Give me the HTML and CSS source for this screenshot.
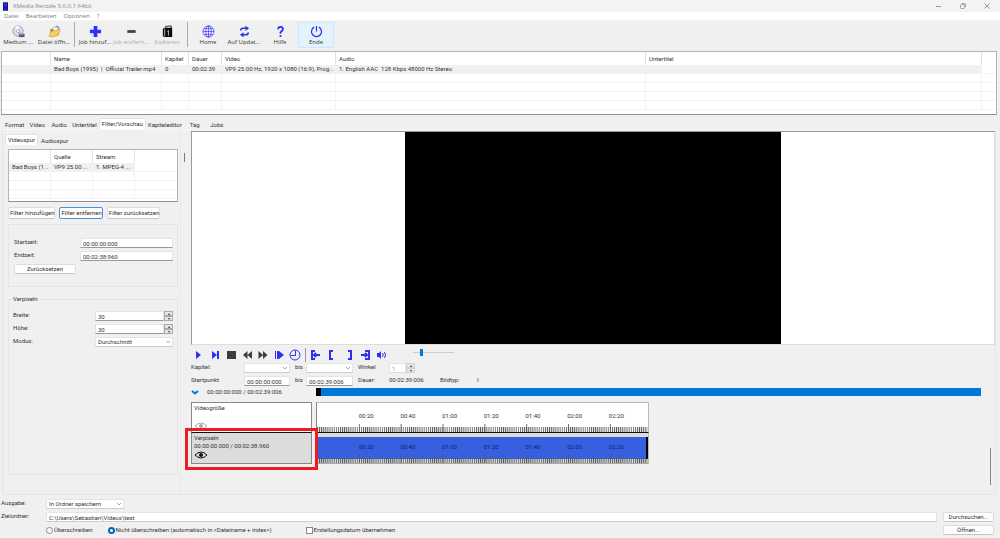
FILE: index.html
```
<!DOCTYPE html>
<html lang="de">
<head>
<meta charset="UTF-8" />
<meta name="viewport" content="width=device-width, initial-scale=1" />
<title>XMedia Recode 3.6.0.1 64bit</title>
<link rel="stylesheet" href="styles.css">
</head>
<body>

  <header class="titlebar">
    <svg class="app-icon" viewBox="0 0 6 10"><rect width="6" height="10" fill="#111144"/><rect x="1" y="1" width="4" height="4" fill="#2b2bff"/><rect x="1" y="6" width="4" height="3" fill="#2020f0"/></svg>
    <span class="app-title">XMedia Recode 3.6.0.1 64bit</span>
    <button class="win-btn" aria-label="Minimieren"><svg viewBox="0 0 8 8"><path d="M1 4.500h5"/></svg></button>
    <button class="win-btn" aria-label="Wiederherstellen"><svg viewBox="0 0 8 8"><rect x="1.500" y="2.500" width="4" height="4" rx="1"/><path d="M3 1.500h2.500q1 0 1 1V5"/></svg></button>
    <button class="win-btn" aria-label="Schließen"><svg viewBox="0 0 8 8"><path d="M1.500 1.500l5 5M6.500 1.500l-5 5"/></svg></button>
  </header>

  <nav class="menubar">
    <a href="#">Datei</a>
    <a href="#">Bearbeiten</a>
    <a href="#">Optionen</a>
    <a href="#">?</a>
  </nav>

  <div class="toolbar">
    <button class="tool">
      <svg viewBox="0 0 14 14"><circle cx="6.500" cy="6.500" r="5.500" fill="#dcdcee" stroke="#9a9ab8"/><path d="M6.500 6.500L3 2.500A5 5 0 0 1 8 1.500z" fill="#fff"/><path d="M6.500 6.500L11 9a5 5 0 0 1-4 2.500z" fill="#b9b9dd"/><circle cx="6.500" cy="6.500" r="1.600" fill="#fff" stroke="#8888aa" stroke-width=".6"/><rect x="7.500" y="9.500" width="6" height="3.500" fill="#555"/><rect x="8" y="10" width="4" height="1" fill="#aaa"/></svg>
      <span>Medium ...</span>
    </button>
    <button class="tool">
      <svg viewBox="0 0 14 14"><path d="M2 5l3-1.500 1.500 1L11 2l1 8-8 3z" fill="#c98a1b"/><path d="M5 3l5-2 1.500 5-5 2.500z" fill="#f4f8ff" stroke="#7b94b4" stroke-width=".5"/><path d="M1 12l2.500-5 4-1 5.500-2-2 7-7 2z" fill="#f7d064" stroke="#c98a1b" stroke-width=".6"/><path d="M8 2.500q3-2.500 4 1" fill="none" stroke="#3d78c8"/></svg>
      <span>Datei öffn...</span>
    </button>
    <span class="tool-sep"></span>
    <button class="tool">
      <svg viewBox="0 0 14 14"><path d="M5 1h4v4h4v4H9v4H5V9H1V5h4z" fill="#2f2ff5"/></svg>
      <span>Job hinzuf...</span>
    </button>
    <button class="tool" disabled>
      <svg viewBox="0 0 14 14"><rect x="2.500" y="5.500" width="9" height="3" fill="#444"/></svg>
      <span>Job entfern...</span>
    </button>
    <button class="tool" disabled>
      <svg viewBox="0 0 14 14"><path d="M2 4l2-1h8v10H4l-2-1z" fill="#0a0a0a"/><path d="M5 3V1.500l6-.5v2" fill="none" stroke="#222"/><path d="M4 4v8M8 6.500v5" stroke="#eee" stroke-width=".8"/><path d="M7 7l1.500-1" stroke="#eee"/></svg>
      <span>Kodieren</span>
    </button>
    <span class="tool-sep"></span>
    <button class="tool">
      <svg class="line thin" viewBox="0 0 14 14"><circle cx="7" cy="7" r="6"/><ellipse cx="7" cy="7" rx="3" ry="6"/><path d="M7 1v12M1 7h12M2 4h10M2 10h10"/></svg>
      <span>Home</span>
    </button>
    <button class="tool">
      <svg viewBox="0 0 14 14"><path d="M3 6q0-2.500 2.500-2.500H9M11 8q0 2.500-2.500 2.500H5" fill="none" stroke="#2f2ff5" stroke-width="1.800"/><path d="M8 .8l4 2.700-4 2.700zM6 7.800l-4 2.700 4 2.700z" fill="#2f2ff5"/></svg>
      <span>Auf Updat...</span>
    </button>
    <button class="tool">
      <svg viewBox="0 0 14 14"><path d="M4.500 4.500Q4.500 2 7 2t2.500 2.300Q9.500 6 8 6.800T7 9.500" fill="none" stroke="#2f2ff5" stroke-width="2"/><rect x="6" y="11" width="2" height="2" fill="#2f2ff5"/></svg>
      <span>Hilfe</span>
    </button>
    <button class="tool active">
      <svg viewBox="0 0 14 14"><path d="M4.500 2.300a5.400 5.400 0 1 0 5 0M7 1v6" fill="none" stroke="#2f2ff5" stroke-width="1.300"/></svg>
      <span>Ende</span>
    </button>
  </div>

  <div class="list jobs">
    <table>
      <colgroup><col class="c-icon"><col class="c-name"><col class="c-chap"><col class="c-dur"><col class="c-video"><col class="c-audio"><col><col class="c-end"></colgroup>
      <thead>
        <tr><th></th><th>Name</th><th>Kapitel</th><th>Dauer</th><th>Video</th><th>Audio</th><th>Untertitel</th><th></th></tr>
      </thead>
      <tbody>
        <tr class="selected"><td></td><td>Bad Boys (1995) &nbsp;| &nbsp;Official Trailer.mp4</td><td>0</td><td>00:02:39</td><td>VP9 25.00 Hz, 1920 x 1080 (16:9), Prog...</td><td>1. English AAC &nbsp;128 Kbps 48000 Hz Stereo</td><td></td><td></td></tr>
        <tr><td></td><td></td><td></td><td></td><td></td><td></td><td></td><td></td></tr>
        <tr><td></td><td></td><td></td><td></td><td></td><td></td><td></td><td></td></tr>
        <tr><td></td><td></td><td></td><td></td><td></td><td></td><td></td><td></td></tr>
        <tr><td></td><td></td><td></td><td></td><td></td><td></td><td></td><td></td></tr>
      </tbody>
    </table>
  </div>

  <div class="tabs main-tabs">
    <button class="tab">Format</button>
    <button class="tab">Video</button>
    <button class="tab">Audio</button>
    <button class="tab">Untertitel</button>
    <button class="tab current">Filter/Vorschau</button>
    <button class="tab">Kapiteleditor</button>
    <button class="tab">Tag</button>
    <button class="tab">Jobs</button>
  </div>

  <main class="page">
    <section class="side">
      <div class="tabs">
        <button class="tab current">Videospur</button>
        <button class="tab">Audiospur</button>
      </div>
      <div class="side-body">
        <div class="list streams">
          <table>
            <colgroup><col class="c-stream"><col class="c-stream"><col class="c-stream"><col></colgroup>
            <thead>
              <tr><th></th><th>Quelle</th><th>Stream</th><th></th></tr>
            </thead>
            <tbody>
              <tr class="selected"><td>Bad Boys (1...</td><td>VP9 25.00 ...</td><td>1. MPEG-4 ...</td><td></td></tr>
              <tr><td></td><td></td><td></td><td></td></tr>
              <tr><td></td><td></td><td></td><td></td></tr>
              <tr><td></td><td></td><td></td><td></td></tr>
            </tbody>
          </table>
        </div>
        <div class="filter-btns">
          <button class="btn">Filter hinzufügen</button>
          <button class="btn focus">Filter entfernen</button>
          <button class="btn">Filter zurücksetzen</button>
        </div>
        <div class="group times">
          <label for="start">Startzeit:</label>
          <input type="text" id="start" value="00:00:00:000">
          <label for="end">Endzeit:</label>
          <input type="text" id="end" value="00:02:38:960">
          <button class="btn reset">Zurücksetzen</button>
        </div>
        <fieldset class="group pixelate">
          <legend>Verpixeln</legend>
          <div class="fields">
            <label for="width">Breite:</label>
            <span class="spin"><input type="text" id="width" value="30"><span class="steps"><button aria-label="Breite erhöhen">▴</button><button aria-label="Breite verringern">▾</button></span></span>
            <label for="height">Höhe:</label>
            <span class="spin"><input type="text" id="height" value="30"><span class="steps"><button aria-label="Höhe erhöhen">▴</button><button aria-label="Höhe verringern">▾</button></span></span>
            <label for="mode">Modus:</label>
            <select id="mode"><option>Durchschnitt</option></select>
          </div>
        </fieldset>
      </div>
    </section>

    <div class="splitter"></div>

    <section class="preview">
      <div class="screen"><div class="video"></div></div>

      <div class="player">
        <button aria-label="Wiedergabe"><svg viewBox="0 0 12 12"><path d="M3 2l5 4-5 4z"/></svg></button>
        <button aria-label="Nächstes Bild"><svg viewBox="0 0 12 12"><path d="M3 2l5 4-5 4zM8 2h2v8H8z"/></svg></button>
        <button class="dark" aria-label="Stopp"><svg viewBox="0 0 12 12"><path d="M2 2h9v8H2z"/></svg></button>
        <button class="dark" aria-label="Zurückspulen"><svg viewBox="0 0 12 12"><path d="M6.500 2v8L2 6zM11 2v8L6.500 6z"/></svg></button>
        <button class="dark" aria-label="Vorspulen"><svg viewBox="0 0 12 12"><path d="M1.500 2v8L6 6zM6 2v8l4.500-4z"/></svg></button>
        <button aria-label="Zeitlupe"><svg viewBox="0 0 12 12"><path d="M2 2h1v8H2zM4 2h2v8H4zM6 2l5 4-5 4z"/></svg></button>
        <button aria-label="Position"><svg class="line" viewBox="0 0 12 12"><circle cx="6" cy="6" r="5"/><path d="M6.500 1.500v5H2"/></svg></button>
        <span class="player-sep"></span>
        <button aria-label="Zum Startpunkt"><svg class="line thick" viewBox="0 0 12 12"><path d="M5 2H2v8h3M10 6H4M6 4L4 6l2 2"/></svg></button>
        <button aria-label="Startpunkt setzen"><svg class="line thick" viewBox="0 0 12 12"><path d="M7 2H4v8h3"/></svg></button>
        <button class="gap" aria-label="Endpunkt setzen"><svg class="line thick" viewBox="0 0 12 12"><path d="M3 2h3v8H3"/></svg></button>
        <button aria-label="Zum Endpunkt"><svg class="line thick" viewBox="0 0 12 12"><path d="M4 2h4v8H4M0 6h6M4 4l2 2-2 2"/></svg></button>
        <button aria-label="Ton"><svg viewBox="0 0 12 12"><path d="M0 4h2l2-2v8L2 8H0z"/><path class="wave" d="M5.500 4q1.500 2 0 4M7.500 3q2 3 0 6"/></svg></button>
        <input class="volume" type="range" aria-label="Lautstärke" min="0" max="100" value="18">
      </div>

      <div class="points">
        <label for="chapFrom">Kapitel:</label>
        <select id="chapFrom"><option></option></select>
        <label class="to" for="chapTo">bis</label>
        <select id="chapTo"><option></option></select>
        <label class="pad" for="angle">Winkel</label>
        <span class="spin small"><input type="text" id="angle" value="1"><span class="steps"><button aria-label="Winkel erhöhen">▴</button><button aria-label="Winkel verringern">▾</button></span></span>
        <span></span>
        <span></span>
        <label for="from">Startpunkt</label>
        <input type="text" id="from" value="00:00:00:000">
        <label class="to" for="to">bis</label>
        <input type="text" id="to" value="00:02:39:006">
        <span class="pad">Dauer:</span>
        <span>00:02:39:006</span>
        <span>Bildtyp:</span>
        <span>I</span>
      </div>

      <div class="timeline">
        <div class="clock">
          <button class="fold" aria-label="Zeitleiste einklappen"><svg viewBox="0 0 8 5"><path d="M1 1l3 2.500L7 1"/></svg></button>
          <span>00:00:00:000 / 00:02:39:006</span>
        </div>
        <input class="seek" type="range" aria-label="Position" min="0" max="159" value="0">

        <div class="track-head">
          <span>Videogröße</span>
          <svg class="eye faint" viewBox="0 0 14 8"><path d="M1 4q6-6 12 0-6 6-12 0z"/><circle cx="7" cy="4" r="2"/></svg>
        </div>
        <div class="ruler">
          <div class="labels"><span></span><span>00:20</span><span>00:40</span><span>01:00</span><span>01:20</span><span>01:40</span><span>02:00</span><span>02:20</span></div>
          <svg class="ticks" viewBox="0 0 158 8" preserveAspectRatio="none">
            <defs>
              <pattern id="sec" width="1" height="8" patternUnits="userSpaceOnUse"><rect y="3" width=".45" height="5"/></pattern>
              <pattern id="mark" width="20" height="8" patternUnits="userSpaceOnUse"><rect width=".4" height="8"/></pattern>
            </defs>
            <rect width="158" height="8" fill="url(#sec)"/>
            <rect x="20" width="138" height="8" fill="url(#mark)"/>
          </svg>
        </div>

        <div class="track-head selected">
          <span>Verpixeln</span>
          <span>00:00:00.000 / 00:02:38.960</span>
          <svg class="eye" viewBox="0 0 14 8"><path d="M1 4q6-6 12 0-6 6-12 0z"/><circle cx="7" cy="4" r="2"/></svg>
          <div class="highlight"></div>
        </div>
        <div class="ruler filled">
          <div class="labels"><span></span><span>00:20</span><span>00:40</span><span>01:00</span><span>01:20</span><span>01:40</span><span>02:00</span><span>02:20</span></div>
          <svg class="ticks" viewBox="0 0 158 8" preserveAspectRatio="none">
            <rect width="158" height="8" fill="url(#sec)"/>
            <rect x="20" width="138" height="8" fill="url(#mark)"/>
          </svg>
        </div>
      </div>
    </section>

    <div class="scroll"><div class="scroll-thumb"></div></div>
  </main>

  <footer class="output">
    <label for="target">Ausgabe:</label>
    <select id="target"><option>In Ordner speichern</option></select>
    <span></span>
    <label for="folder">Zielordner:</label>
    <input type="text" id="folder" value="C:\Users\Sebastian\Videos\test">
    <button class="btn">Durchsuchen...</button>
    <span></span>
    <div class="options">
      <label><input type="radio" name="overwrite">Überschreiben</label>
      <label><input type="radio" name="overwrite" checked>Nicht überschreiben (automatisch in &lt;Dateiname + index&gt;)</label>
      <label><input type="checkbox">Erstellungsdatum übernehmen</label>
    </div>
    <button class="btn">Öffnen...</button>
  </footer>

</body>
</html>
```
FILE: styles.css
```
* {
  box-sizing: border-box;
}
body {
  margin: 0;
  min-height: 100vh;
  display: flex;
  flex-direction: column;
  background: #f0f0f0;
  color: #333;
  font-family: Roboto, "Liberation Sans", sans-serif;
  font-size: 6px;
  line-height: 8px;
}
button,
input,
select {
  font: inherit;
  color: inherit;
  margin: 0;
  padding: 0;
  border: none;
  background: none;
  border-radius: 0;
  min-width: 0;
}
svg {
  display: block;
}

/* title and menu */
.titlebar,
.menubar,
.toolbar {
  font-family: "Open Sans", "Noto Sans", sans-serif;
}
.titlebar {
  display: flex;
  align-items: center;
  height: 12px;
  padding: 0 9px 0 3px;
  background: #f3f3f3;
  color: #888;
}
.app-icon {
  width: 5px;
  height: 9px;
  margin-right: 5px;
}
.app-title {
  flex: 1;
}
.win-btn {
  width: 8px;
  height: 8px;
  margin-left: 16px;
}
.win-btn svg {
  fill: none;
  stroke: #999;
}
.menubar {
  display: flex;
  gap: 7px;
  height: 9px;
  padding: 0 4px;
  line-height: 9px;
  background: #fff;
  border-bottom: 1px solid #f5f5f5;
}
.menubar a {
  color: #777;
  text-decoration: none;
}

/* toolbar */
.toolbar {
  display: flex;
  align-items: flex-start;
  height: 30px;
  padding-top: 1px;
}
.tool {
  display: flex;
  flex-direction: column;
  align-items: center;
  width: 36px;
  height: 26px;
  padding-top: 2px;
  border: 1px solid transparent;
  border-radius: 2px;
  white-space: nowrap;
}
.tool svg {
  width: 13px;
  height: 13px;
}
.tool:disabled {
  color: #aaa;
}
.tool.active {
  background: #e3f2fd;
  border-color: #cce8ff;
}
.tool-sep {
  width: 1px;
  height: 25px;
  margin: 0 2px;
  background: #aaa;
}
.line {
  fill: none;
  stroke: #2f2ff5;
}
.line.thin {
  stroke-width: .7;
}
.line.thick {
  stroke-width: 2;
}

/* lists */
.list {
  background: #fff;
  border: 1px solid #b4b4b4;
  border-bottom-color: #90909a;
  overflow: hidden;
}
.jobs {
  height: 64px;
  margin: 0 3px 0 1px;
}
.list table {
  width: 100%;
  table-layout: fixed;
  border-collapse: separate;
  border-spacing: 0;
}
.list th {
  height: 13px;
  padding: 0 3px;
  font-weight: normal;
  text-align: left;
  border-right: 1px solid #e2e2e2;
}
.list td {
  height: 9px;
  padding: 0 3px;
  white-space: nowrap;
  border-right: 1px solid #f3f3f3;
  border-bottom: 1px solid #f3f3f3;
}
.list th:last-child,
.list td:last-child {
  border-right: none;
}
.list .selected td:not(:last-child) {
  background: #f0f0f0;
}
.c-icon { width: 49px; }
.c-name { width: 111px; }
.c-chap { width: 27px; }
.c-dur { width: 33px; }
.c-video { width: 114px; }
.c-audio { width: 310px; }
.c-end { width: 14px; }
.c-stream { width: 42px; }

/* tabs */
.tabs {
  display: flex;
  align-items: flex-end;
}
.main-tabs {
  padding: 3px 3px 0;
}
.tab {
  height: 10px;
  min-width: 22px;
  padding: 0 1px;
  border: 1px solid transparent;
  border-bottom: none;
}
.tab.current {
  height: 11px;
  padding: 0 2px;
  background: #fff;
  border-color: #e2e2e2;
}

/* page */
.page {
  flex: 1;
  display: flex;
  margin: 0 4px 0 2px;
  border: 1px solid #e6e6e6;
  border-top-color: #f8f8f8;
}
.side {
  width: 178px;
  padding: 4px 2px 0;
  border-right: 1px solid #e9e9e9;
}
.side .tab {
  padding: 0 2px;
}
.side-body {
  padding: 4px 0 0 3px;
}
.streams {
  height: 53px;
}
.filter-btns {
  display: flex;
  gap: 4px;
  margin-right: 18px;
  padding: 5px 0;
}
.btn {
  height: 12px;
  line-height: 10px;
  padding: 0 1px;
  background: #fdfdfd;
  border: 1px solid #ddd;
  border-bottom-color: #c4c4c4;
  border-radius: 2px;
  white-space: nowrap;
}
.filter-btns .btn {
  flex: 1 1 auto;
}
.btn.focus {
  border: 1px solid #4a90d9;
}
.group {
  margin: 0;
  border: 1px solid #e5e5e5;
}
.times {
  display: grid;
  grid-template-columns: 66px 1fr;
  gap: 3px 0;
  align-content: start;
  height: 63px;
  padding: 13px 4px 0 5px;
}
.pixelate {
  height: 180px;
  margin-top: 8px;
  padding: 0 4px;
}
.pixelate legend {
  padding: 0;
}
.fields {
  display: grid;
  grid-template-columns: 82px 1fr;
  gap: 3px 0;
  padding-top: 8px;
}
input[type="text"],
select {
  height: 10px;
  width: 100%;
  padding: 0 2px;
  background-color: #fff;
  border: 1px solid #e4e4e4;
  border-bottom-color: #999;
}
select {
  appearance: none;
  line-height: 8px;
  background-image: url("data:image/svg+xml,%3Csvg xmlns='http://www.w3.org/2000/svg' viewBox='0 0 6 4'%3E%3Cpath d='M1 1l2 2 2-2' fill='none' stroke='%23888' stroke-width='.7'/%3E%3C/svg%3E");
  background-repeat: no-repeat;
  background-position: right 1px center;
  background-size: 6px 4px;
  border-bottom-color: #ccc;
}
.reset {
  width: 62px;
  height: 10px;
  line-height: 8px;
}
.spin {
  display: flex;
  height: 10px;
}
.steps {
  display: flex;
  flex-direction: column;
  flex: none;
  width: 9px;
}
.steps button {
  height: 5px;
  font-size: 4px;
  line-height: 3px;
  background: #e8e8e8;
  border: 1px solid #aaa;
  overflow: hidden;
}
.small input[type="text"] {
  color: #999;
  border-bottom-color: #ddd;
}
.small .steps button {
  border-color: #d0d0d0;
}

.splitter {
  width: 10px;
  padding: 23px 0 0 3px;
}
.splitter::before {
  content: "";
  display: block;
  width: 1px;
  height: 9px;
  background: #777;
}

/* preview */
.preview {
  flex: 1;
  padding-top: 1px;
}
.screen {
  height: 214px;
  margin-right: -10px;
  background: #fff;
  border: 1px solid #999;
  border-right-color: #ddd;
  border-bottom-color: #ddd;
}
.video {
  height: 212px;
  aspect-ratio: 376 / 212;
  margin: 0 auto;
  background: #000;
}
.player {
  display: flex;
  align-items: center;
  gap: 4px;
  height: 16px;
  margin-top: 2px;
  padding-left: 2px;
}
.player button {
  width: 12px;
  height: 12px;
}
.player svg {
  fill: #3030f0;
}
.player .line {
  fill: none;
}
.player .dark svg {
  fill: #3c3c3c;
}
.player .gap {
  margin-left: 3px;
}
.player .wave {
  fill: none;
  stroke: #3030f0;
}
.player-sep {
  width: 1px;
  height: 14px;
  background: #999;
}
input[type="range"] {
  appearance: none;
}
.volume {
  width: 41px;
  height: 8px;
  margin: 0 0 6px 20px;
}
.volume::-webkit-slider-runnable-track {
  height: 1px;
  background: #ccc;
}
.volume::-webkit-slider-thumb {
  appearance: none;
  width: 3px;
  height: 7px;
  margin-top: -3px;
  background: #0078d7;
}
.points {
  display: grid;
  grid-template-columns: 53px 46px 16px 47px 36px 51px 37px 1fr;
  gap: 3px 0;
}
.points .small {
  width: 26px;
}
.to,
.pad {
  padding-left: 5px;
}

/* timeline */
.timeline {
  display: grid;
  grid-template-columns: 121px 1fr;
  column-gap: 4px;
  padding: 2px 4px 0 0;
}
.clock {
  display: flex;
  gap: 8px;
  height: 14px;
}
.fold {
  width: 8px;
  height: 8px;
}
.fold svg {
  fill: none;
  stroke: #0078d7;
  stroke-width: 2;
}
.seek {
  width: 100%;
  height: 8px;
  background: #0078d7;
}
.seek::-webkit-slider-thumb {
  appearance: none;
  width: 5px;
  height: 8px;
  background: #000;
}
.track-head {
  position: relative;
  display: flex;
  flex-direction: column;
  height: 31px;
  padding: 1px 2px 2px;
  background: #fff;
  border: 1px solid #888;
  border-bottom-color: #111;
}
.track-head.selected {
  background: #dcdcdc;
  border-top: none;
  border-bottom-color: #888;
}
.eye {
  width: 14px;
  height: 8px;
  margin-top: auto;
  fill: none;
  stroke: #111;
}
.eye circle {
  fill: #111;
  stroke: none;
}
.selected .eye {
  margin-top: 1px;
}
.eye.faint {
  stroke: #aaa;
}
.eye.faint circle {
  fill: #aaa;
}
.highlight {
  position: absolute;
  inset: -5px -7px -7px -7px;
  border: 3px solid #ed1c24;
}
.ruler {
  display: flex;
  flex-direction: column;
  justify-content: flex-end;
  width: 50%;
  height: 31px;
  background: #fff;
  border: 1px solid #bbb;
  border-left-color: #888;
  border-bottom-color: #111;
}
.labels {
  display: grid;
  grid-template-columns: repeat(8, 1fr);
  margin-right: -3px;
  padding-bottom: 4px;
}
.ticks {
  width: 100%;
  height: 8px;
  fill: #555;
}
.ruler.filled {
  background:
    linear-gradient(#000, #000) right 4px / 2px 22px no-repeat,
    linear-gradient(#dcdcdc 4px, #3760e0 4px, #3760e0 26px, #dcdcdc 26px);
  border-top: none;
  border-bottom-color: #aaa;
}
.filled .labels {
  color: #102060;
}

.scroll {
  width: 10px;
  display: flex;
  flex-direction: column;
  justify-content: flex-end;
  align-items: center;
  padding-bottom: 9px;
}
.scroll-thumb {
  width: 1px;
  height: 37px;
  background: #888;
}

/* output */
.output {
  display: grid;
  grid-template-columns: 45px 1fr 51px;
  gap: 3px 0;
  padding: 4px 6px 3px 1px;
}
.output select {
  width: 78px;
}
.output input[type="text"] {
  width: calc(100% - 6px);
  border-bottom-color: #ccc;
}
.output .btn {
  height: 10px;
  line-height: 8px;
}
.options {
  display: flex;
}
.options label {
  display: flex;
  align-items: center;
  gap: 1px;
}
.options label + label {
  margin-left: 15px;
}
.options label:last-child {
  margin-left: 34px;
}
.options input {
  appearance: none;
  width: 7px;
  height: 7px;
  background: #fff;
  border: 1px solid #888;
}
.options input[type="radio"] {
  border-radius: 50%;
}
.options input:checked {
  border: 2px solid #0067c0;
}
```
